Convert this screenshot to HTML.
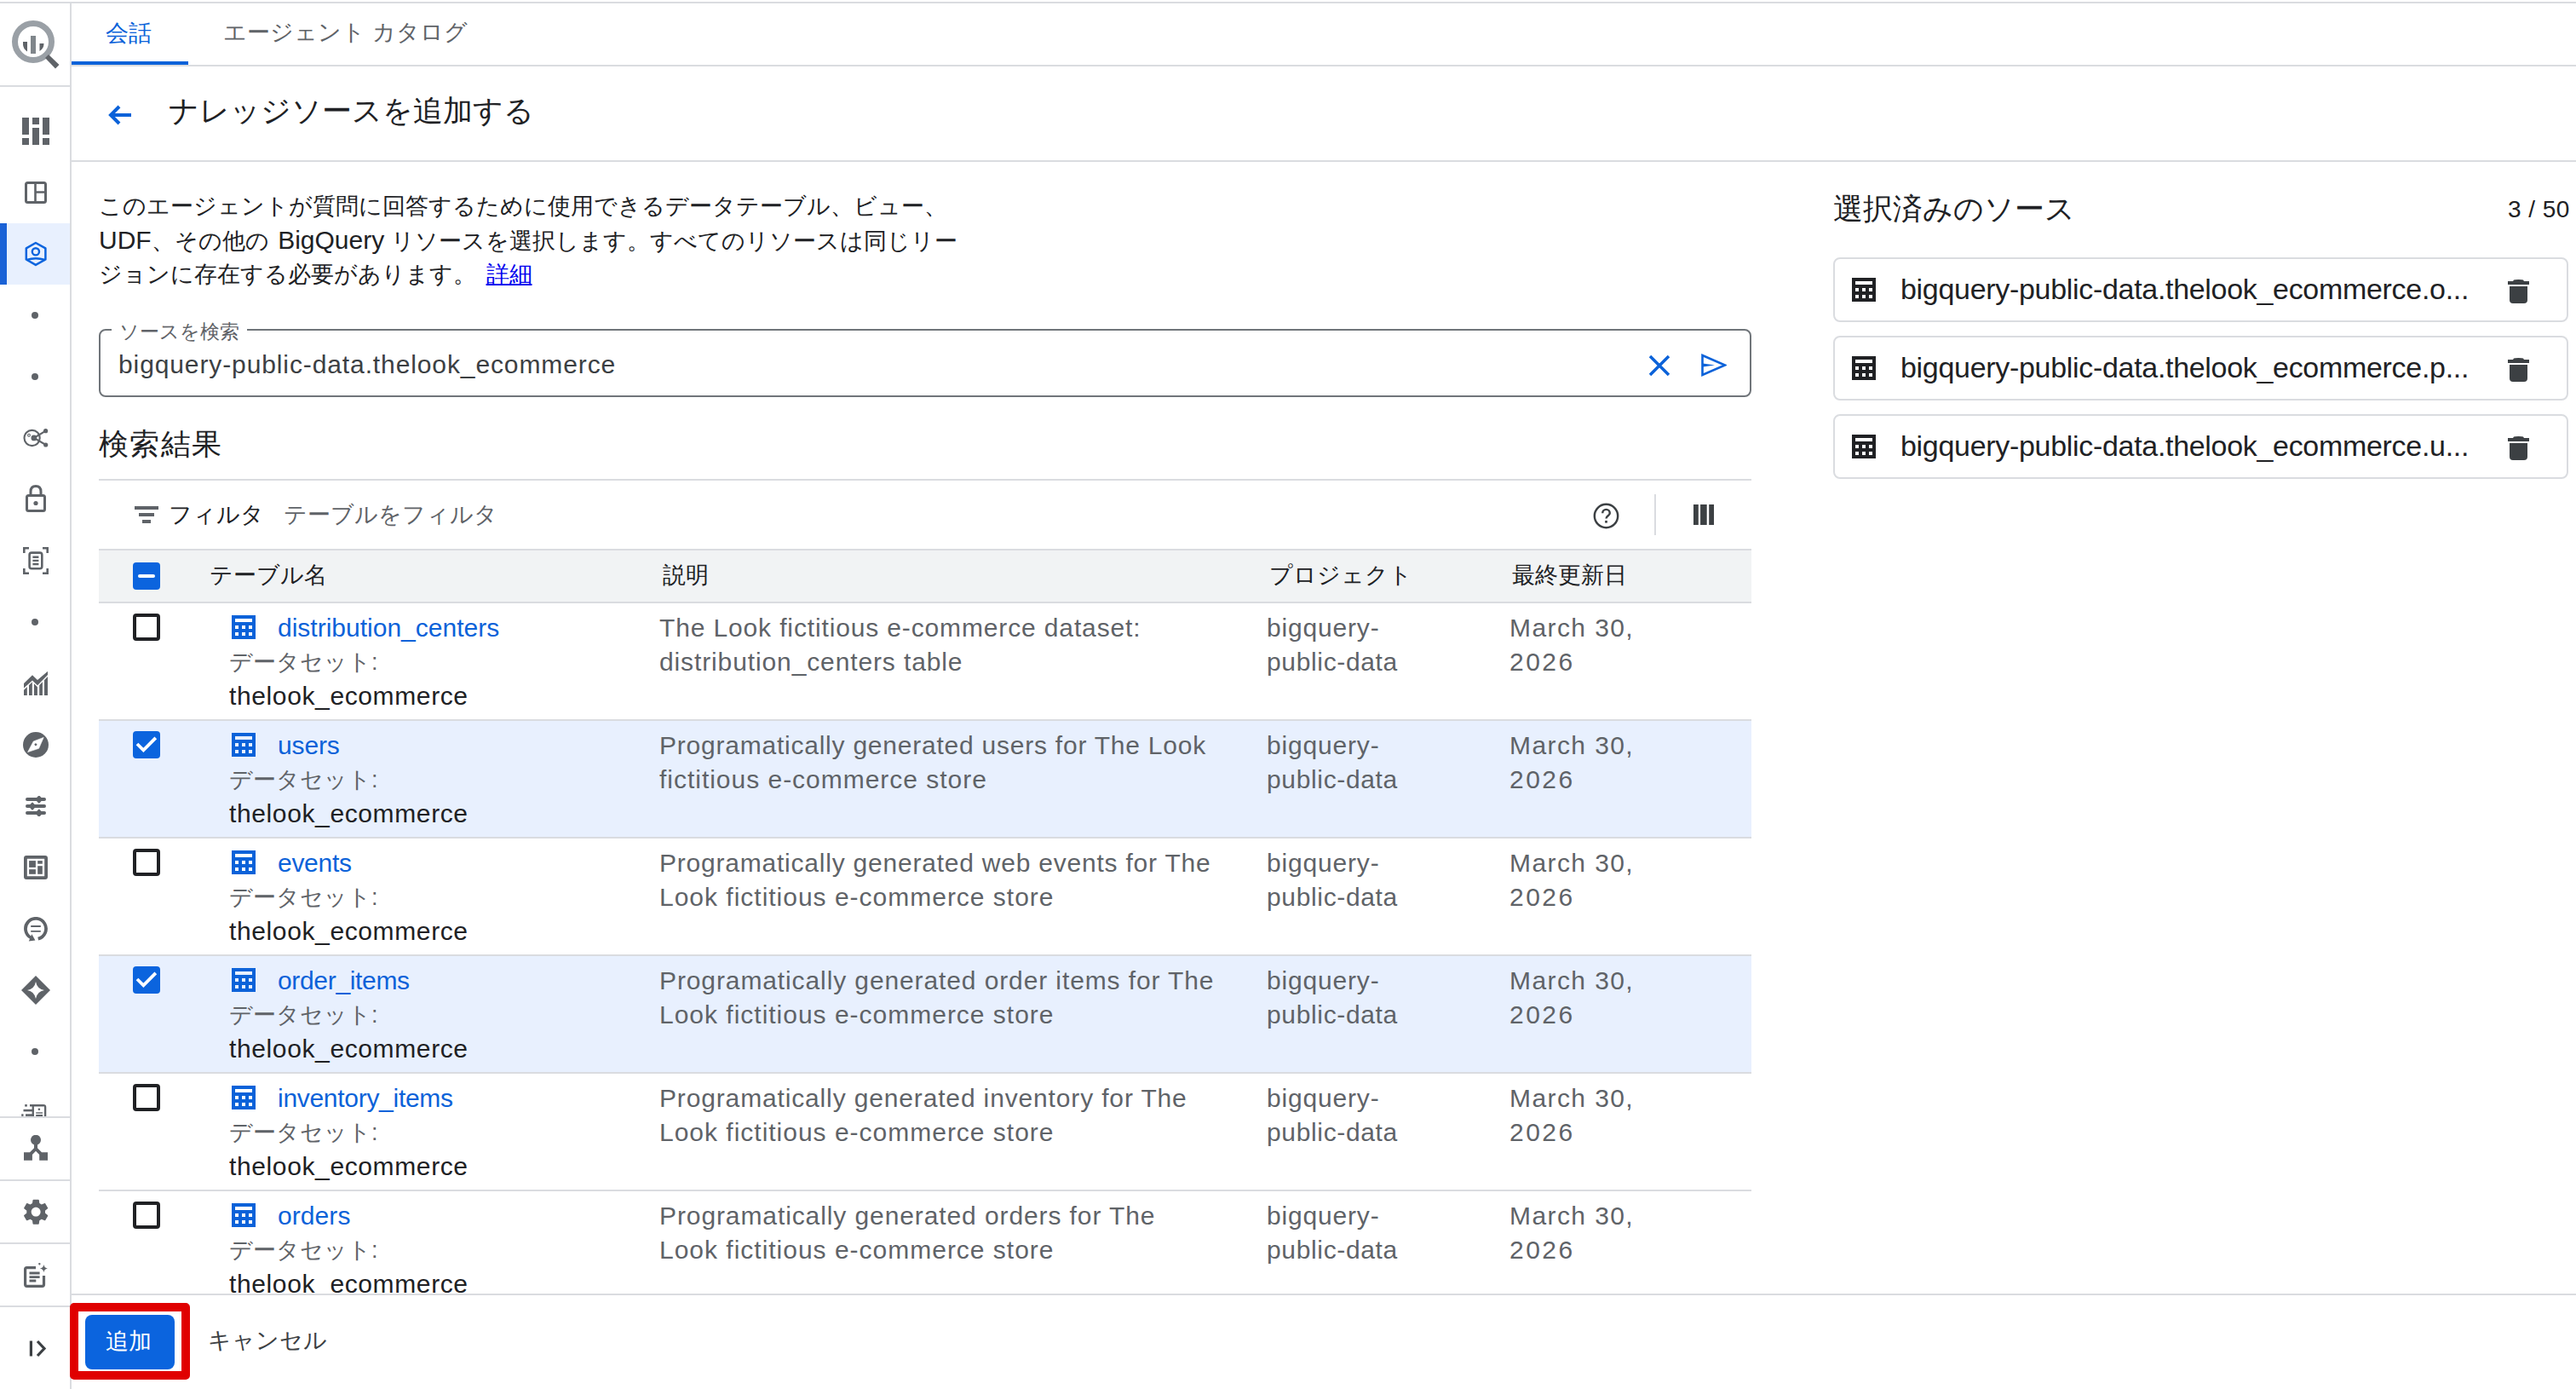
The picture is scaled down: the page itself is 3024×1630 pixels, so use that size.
<!DOCTYPE html>
<html><head><meta charset="utf-8">
<style>
*{box-sizing:border-box;margin:0;padding:0}
html,body{width:3024px;height:1630px;overflow:hidden;background:#fff}
body{position:relative;font-family:"Liberation Sans",sans-serif;color:#202124}
.a{position:absolute}
.line{position:absolute;background:#dadce0}
.ic{position:absolute;display:block}
.t{position:absolute;white-space:nowrap;line-height:40px;font-size:27px}
.lat{font-size:30px}
.t.lat{font-size:30px}
.blue{color:#0b62d9}
.gray{color:#5f6368}
.cb{position:absolute;width:32px;height:32px;border-radius:4px}
.cb.off{border:4px solid #202124}
.cb.on{background:#0b64de}
.row{position:absolute;left:116px;width:1940px;height:138px;border-bottom:2px solid #dadce0}
.row.sel{background:#e8f0fe}
.card{position:absolute;left:2152px;width:863px;height:76px;border:2px solid #dadce0;border-radius:8px}
</style></head><body>
<div class="line" style="left:0;top:2px;width:3024px;height:2px"></div>
<div class="line" style="left:82px;top:4px;width:2px;height:1626px"></div>
<div class="line" style="left:0;top:100px;width:82px;height:2px"></div>
<div class="a" style="left:0;top:262px;width:82px;height:72px;background:#e8f0fe"></div>
<div class="a" style="left:0;top:262px;width:8px;height:72px;background:#1a62d6"></div>
<div class="line" style="left:0;top:1310px;width:82px;height:2px"></div>
<div class="line" style="left:0;top:1384px;width:82px;height:2px"></div>
<div class="line" style="left:0;top:1458px;width:82px;height:2px"></div>
<div class="line" style="left:0;top:1532px;width:82px;height:2px"></div>
<div class="line" style="left:84px;top:76px;width:2940px;height:2px"></div>
<div class="a" style="left:84px;top:72px;width:137px;height:4px;background:#0b62d9"></div>
<div class="t blue" style="left:124px;top:19px;">会話</div>
<div class="t gray" style="left:262px;top:18px;">エージェント カタログ</div>
<div class="line" style="left:84px;top:188px;width:2940px;height:2px"></div>
<svg class="ic" style="left:127px;top:123px" width="28" height="24" viewBox="0 0 28 24"><path d="M13 2 L3 12 L13 22 M3 12 H27" fill="none" stroke="#0b62d9" stroke-width="4"/></svg>
<div class="t " style="left:198px;top:108px;font-size:35px;line-height:44px">ナレッジソースを追加する</div>
<div class="t " style="left:116px;top:222px;">このエージェントが質問に回答するために使用できるデータテーブル、ビュー、</div>
<div class="t " style="left:116px;top:262px;"><span class="lat" style="">UDF</span>、その他の <span class="lat" style="margin-left:3px">BigQuery</span> リソースを選択します。すべてのリソースは同じリー</div>
<div class="t " style="left:116px;top:302px;">ジョンに存在する必要があります。 <span style="color:#0000ee;text-decoration:underline;margin-left:4px">詳細</span></div>
<div class="a" style="left:116px;top:386px;width:1940px;height:80px;border:2px solid #70757a;border-radius:8px"></div>
<div class="a" style="left:131px;top:380px;width:159px;height:10px;background:#fff"></div>
<div class="t gray" style="left:140px;top:374px;font-size:23px;line-height:30px">ソースを検索</div>
<div class="t lat" style="left:139px;top:408px;color:#3c4043;letter-spacing:0.89px">bigquery-public-data.thelook_ecommerce</div>
<svg class="ic" style="left:1935px;top:416px" width="26" height="26" viewBox="0 0 26 26"><path d="M2 2 L24 24 M24 2 L2 24" stroke="#0b62d9" stroke-width="3.5"/></svg>
<svg class="ic" style="left:1997px;top:415px" width="30" height="27" viewBox="0 0 30 27"><path d="M1.5 2 L28 13.5 L1.5 25 Z" fill="none" stroke="#0b62d9" stroke-width="2.6"/><path d="M2 11.6 L16 13.5 L2 15.4 Z" fill="#0b62d9"/></svg>
<div class="t " style="left:116px;top:499px;font-size:35px;line-height:44px;letter-spacing:1.3px">検索結果</div>
<div class="line" style="left:116px;top:562px;width:1940px;height:2px"></div>
<svg class="ic" style="left:158px;top:594px" width="28" height="20" viewBox="0 0 28 20" fill="#5f6368"><rect x="0" y="0" width="28" height="4"/><rect x="5" y="8" width="18" height="4"/><rect x="9" y="16" width="10" height="4"/></svg>
<div class="t " style="left:198px;top:584px;">フィルタ</div>
<div class="t gray" style="left:333px;top:584px;">テーブルをフィルタ</div>
<svg class="ic" style="left:1870px;top:590px" width="31" height="31" viewBox="0 0 24 24"><circle cx="12" cy="12" r="10.6" fill="none" stroke="#3c4043" stroke-width="1.9"/><path d="M8.7 9.4a3.3 3.3 0 0 1 6.6 0c0 2.3-3.3 2.5-3.3 4.9" fill="none" stroke="#3c4043" stroke-width="1.9"/><rect x="10.95" y="16.2" width="2.1" height="2.1" fill="#3c4043"/></svg>
<div class="line" style="left:1942px;top:580px;width:2px;height:48px"></div>
<svg class="ic" style="left:1988px;top:592px" width="24" height="24" viewBox="0 0 24 24" fill="#3c4043"><rect x="0" y="0" width="5.8" height="24"/><rect x="8.1" y="0" width="7.6" height="24"/><rect x="18.2" y="0" width="5.8" height="24"/></svg>
<div class="a" style="left:116px;top:644px;width:1940px;height:64px;background:#f1f3f4;border-top:2px solid #dadce0;border-bottom:2px solid #dadce0"></div>
<div class="cb on" style="left:156px;top:660px"><div class="a" style="left:6px;top:14px;width:20px;height:4px;border-radius:2px;background:#fff"></div></div>
<div class="t " style="left:246px;top:655px;">テーブル名</div>
<div class="t " style="left:778px;top:655px;">説明</div>
<div class="t " style="left:1490px;top:655px;">プロジェクト</div>
<div class="t " style="left:1775px;top:655px;">最終更新日</div>
<div class="row" style="top:708px"></div>
<div class="cb off" style="left:156px;top:720px"></div>
<svg class="ic" style="left:272px;top:722px" width="28" height="28" viewBox="0 0 28 28"><path fill="#0b62d9" fill-rule="evenodd" d="M0 0H28V28H0Z M4 4V8H24V4Z M4 12V16H8V12Z M12 12V16H16V12Z M20 12V16H24V12Z M4 20V24H8V20Z M12 20V24H16V20Z M20 20V24H24V20Z"/></svg>
<div class="t lat blue" style="left:326px;top:717px;letter-spacing:0.0px;">distribution_centers</div>
<div class="t gray" style="left:269px;top:757px;">データセット:</div>
<div class="t lat " style="left:269px;top:797px;letter-spacing:0.62px;">thelook_ecommerce</div>
<div class="t lat gray" style="left:774px;top:717px;letter-spacing:0.86px;">The Look fictitious e-commerce dataset:</div>
<div class="t lat gray" style="left:774px;top:757px;letter-spacing:0.88px;">distribution_centers table</div>
<div class="t lat gray" style="left:1487px;top:717px;letter-spacing:0.82px;">bigquery-</div>
<div class="t lat gray" style="left:1487px;top:757px;letter-spacing:0.65px;">public-data</div>
<div class="t lat gray" style="left:1772px;top:717px;letter-spacing:1.41px;">March 30,</div>
<div class="t lat gray" style="left:1772px;top:757px;letter-spacing:2.47px;">2026</div>
<div class="row sel" style="top:846px"></div>
<div class="cb on" style="left:156px;top:858px"><svg class="ic" style="left:0;top:0" width="32" height="32" viewBox="0 0 32 32"><path d="M5 15 L12.4 22.4 L26.8 7.8" fill="none" stroke="#fff" stroke-width="3.8"/></svg></div>
<svg class="ic" style="left:272px;top:860px" width="28" height="28" viewBox="0 0 28 28"><path fill="#0b62d9" fill-rule="evenodd" d="M0 0H28V28H0Z M4 4V8H24V4Z M4 12V16H8V12Z M12 12V16H16V12Z M20 12V16H24V12Z M4 20V24H8V20Z M12 20V24H16V20Z M20 20V24H24V20Z"/></svg>
<div class="t lat blue" style="left:326px;top:855px;letter-spacing:-0.15px;">users</div>
<div class="t gray" style="left:269px;top:895px;">データセット:</div>
<div class="t lat " style="left:269px;top:935px;letter-spacing:0.62px;">thelook_ecommerce</div>
<div class="t lat gray" style="left:774px;top:855px;letter-spacing:0.77px;">Programatically generated users for The Look</div>
<div class="t lat gray" style="left:774px;top:895px;letter-spacing:0.98px;">fictitious e-commerce store</div>
<div class="t lat gray" style="left:1487px;top:855px;letter-spacing:0.82px;">bigquery-</div>
<div class="t lat gray" style="left:1487px;top:895px;letter-spacing:0.65px;">public-data</div>
<div class="t lat gray" style="left:1772px;top:855px;letter-spacing:1.41px;">March 30,</div>
<div class="t lat gray" style="left:1772px;top:895px;letter-spacing:2.47px;">2026</div>
<div class="row" style="top:984px"></div>
<div class="cb off" style="left:156px;top:996px"></div>
<svg class="ic" style="left:272px;top:998px" width="28" height="28" viewBox="0 0 28 28"><path fill="#0b62d9" fill-rule="evenodd" d="M0 0H28V28H0Z M4 4V8H24V4Z M4 12V16H8V12Z M12 12V16H16V12Z M20 12V16H24V12Z M4 20V24H8V20Z M12 20V24H16V20Z M20 20V24H24V20Z"/></svg>
<div class="t lat blue" style="left:326px;top:993px;letter-spacing:-0.28px;">events</div>
<div class="t gray" style="left:269px;top:1033px;">データセット:</div>
<div class="t lat " style="left:269px;top:1073px;letter-spacing:0.62px;">thelook_ecommerce</div>
<div class="t lat gray" style="left:774px;top:993px;letter-spacing:0.78px;">Programatically generated web events for The</div>
<div class="t lat gray" style="left:774px;top:1033px;letter-spacing:0.99px;">Look fictitious e-commerce store</div>
<div class="t lat gray" style="left:1487px;top:993px;letter-spacing:0.82px;">bigquery-</div>
<div class="t lat gray" style="left:1487px;top:1033px;letter-spacing:0.65px;">public-data</div>
<div class="t lat gray" style="left:1772px;top:993px;letter-spacing:1.41px;">March 30,</div>
<div class="t lat gray" style="left:1772px;top:1033px;letter-spacing:2.47px;">2026</div>
<div class="row sel" style="top:1122px"></div>
<div class="cb on" style="left:156px;top:1134px"><svg class="ic" style="left:0;top:0" width="32" height="32" viewBox="0 0 32 32"><path d="M5 15 L12.4 22.4 L26.8 7.8" fill="none" stroke="#fff" stroke-width="3.8"/></svg></div>
<svg class="ic" style="left:272px;top:1136px" width="28" height="28" viewBox="0 0 28 28"><path fill="#0b62d9" fill-rule="evenodd" d="M0 0H28V28H0Z M4 4V8H24V4Z M4 12V16H8V12Z M12 12V16H16V12Z M20 12V16H24V12Z M4 20V24H8V20Z M12 20V24H16V20Z M20 20V24H24V20Z"/></svg>
<div class="t lat blue" style="left:326px;top:1131px;letter-spacing:-0.33px;">order_items</div>
<div class="t gray" style="left:269px;top:1171px;">データセット:</div>
<div class="t lat " style="left:269px;top:1211px;letter-spacing:0.62px;">thelook_ecommerce</div>
<div class="t lat gray" style="left:774px;top:1131px;letter-spacing:0.89px;">Programatically generated order items for The</div>
<div class="t lat gray" style="left:774px;top:1171px;letter-spacing:0.99px;">Look fictitious e-commerce store</div>
<div class="t lat gray" style="left:1487px;top:1131px;letter-spacing:0.82px;">bigquery-</div>
<div class="t lat gray" style="left:1487px;top:1171px;letter-spacing:0.65px;">public-data</div>
<div class="t lat gray" style="left:1772px;top:1131px;letter-spacing:1.41px;">March 30,</div>
<div class="t lat gray" style="left:1772px;top:1171px;letter-spacing:2.47px;">2026</div>
<div class="row" style="top:1260px"></div>
<div class="cb off" style="left:156px;top:1272px"></div>
<svg class="ic" style="left:272px;top:1274px" width="28" height="28" viewBox="0 0 28 28"><path fill="#0b62d9" fill-rule="evenodd" d="M0 0H28V28H0Z M4 4V8H24V4Z M4 12V16H8V12Z M12 12V16H16V12Z M20 12V16H24V12Z M4 20V24H8V20Z M12 20V24H16V20Z M20 20V24H24V20Z"/></svg>
<div class="t lat blue" style="left:326px;top:1269px;letter-spacing:-0.29px;">inventory_items</div>
<div class="t gray" style="left:269px;top:1309px;">データセット:</div>
<div class="t lat " style="left:269px;top:1349px;letter-spacing:0.62px;">thelook_ecommerce</div>
<div class="t lat gray" style="left:774px;top:1269px;letter-spacing:0.85px;">Programatically generated inventory for The</div>
<div class="t lat gray" style="left:774px;top:1309px;letter-spacing:0.99px;">Look fictitious e-commerce store</div>
<div class="t lat gray" style="left:1487px;top:1269px;letter-spacing:0.82px;">bigquery-</div>
<div class="t lat gray" style="left:1487px;top:1309px;letter-spacing:0.65px;">public-data</div>
<div class="t lat gray" style="left:1772px;top:1269px;letter-spacing:1.41px;">March 30,</div>
<div class="t lat gray" style="left:1772px;top:1309px;letter-spacing:2.47px;">2026</div>
<div class="row" style="top:1398px"></div>
<div class="cb off" style="left:156px;top:1410px"></div>
<svg class="ic" style="left:272px;top:1412px" width="28" height="28" viewBox="0 0 28 28"><path fill="#0b62d9" fill-rule="evenodd" d="M0 0H28V28H0Z M4 4V8H24V4Z M4 12V16H8V12Z M12 12V16H16V12Z M20 12V16H24V12Z M4 20V24H8V20Z M12 20V24H16V20Z M20 20V24H24V20Z"/></svg>
<div class="t lat blue" style="left:326px;top:1407px;letter-spacing:0.08px;">orders</div>
<div class="t gray" style="left:269px;top:1447px;">データセット:</div>
<div class="t lat " style="left:269px;top:1487px;letter-spacing:0.62px;">thelook_ecommerce</div>
<div class="t lat gray" style="left:774px;top:1407px;letter-spacing:0.9px;">Programatically generated orders for The</div>
<div class="t lat gray" style="left:774px;top:1447px;letter-spacing:0.99px;">Look fictitious e-commerce store</div>
<div class="t lat gray" style="left:1487px;top:1407px;letter-spacing:0.82px;">bigquery-</div>
<div class="t lat gray" style="left:1487px;top:1447px;letter-spacing:0.65px;">public-data</div>
<div class="t lat gray" style="left:1772px;top:1407px;letter-spacing:1.41px;">March 30,</div>
<div class="t lat gray" style="left:1772px;top:1447px;letter-spacing:2.47px;">2026</div>
<div class="a" style="left:84px;top:1518px;width:2940px;height:112px;background:#fff;border-top:2px solid #dadce0"></div>
<div class="a" style="left:82px;top:1529px;width:141px;height:90px;border:10px solid #e00000;border-radius:5px"></div>
<div class="a" style="left:100px;top:1543px;width:105px;height:64px;border-radius:8px;background:#0b64de"></div>
<div class="t " style="left:124px;top:1554px;color:#fff">追加</div>
<div class="t " style="left:244px;top:1553px;color:#3c4043">キャンセル</div>
<div class="t " style="left:2152px;top:223px;font-size:35px;line-height:44px">選択済みのソース</div>
<div class="t lat" style="left:2944px;top:226px;font-size:28px;letter-spacing:0.44px">3 / 50</div>
<div class="card" style="top:302px"></div>
<svg class="ic" style="left:2174px;top:326px" width="28" height="28" viewBox="0 0 28 28"><path fill="#202124" fill-rule="evenodd" d="M0 0H28V28H0Z M4 4V8H24V4Z M4 12V16H8V12Z M12 12V16H16V12Z M20 12V16H24V12Z M4 20V24H8V20Z M12 20V24H16V20Z M20 20V24H24V20Z"/></svg>
<div class="t lat" style="left:2231px;top:317px;font-size:34px;line-height:44px;letter-spacing:-0.31px">bigquery-public-data.thelook_ecommerce.o...</div>
<svg class="ic" style="left:2944px;top:328px" width="25" height="28" viewBox="0 0 25 28"><path fill="#3c4043" d="M7 0.5 Q8 0 12.5 0 Q17 0 18 0.5 L19 2 H25 V6 H0 V2 H6 Z M2 8 H23 V24 Q23 28 19 28 H6 Q2 28 2 24 Z"/></svg>
<div class="card" style="top:394px"></div>
<svg class="ic" style="left:2174px;top:418px" width="28" height="28" viewBox="0 0 28 28"><path fill="#202124" fill-rule="evenodd" d="M0 0H28V28H0Z M4 4V8H24V4Z M4 12V16H8V12Z M12 12V16H16V12Z M20 12V16H24V12Z M4 20V24H8V20Z M12 20V24H16V20Z M20 20V24H24V20Z"/></svg>
<div class="t lat" style="left:2231px;top:409px;font-size:34px;line-height:44px;letter-spacing:-0.31px">bigquery-public-data.thelook_ecommerce.p...</div>
<svg class="ic" style="left:2944px;top:420px" width="25" height="28" viewBox="0 0 25 28"><path fill="#3c4043" d="M7 0.5 Q8 0 12.5 0 Q17 0 18 0.5 L19 2 H25 V6 H0 V2 H6 Z M2 8 H23 V24 Q23 28 19 28 H6 Q2 28 2 24 Z"/></svg>
<div class="card" style="top:486px"></div>
<svg class="ic" style="left:2174px;top:510px" width="28" height="28" viewBox="0 0 28 28"><path fill="#202124" fill-rule="evenodd" d="M0 0H28V28H0Z M4 4V8H24V4Z M4 12V16H8V12Z M12 12V16H16V12Z M20 12V16H24V12Z M4 20V24H8V20Z M12 20V24H16V20Z M20 20V24H24V20Z"/></svg>
<div class="t lat" style="left:2231px;top:501px;font-size:34px;line-height:44px;letter-spacing:-0.31px">bigquery-public-data.thelook_ecommerce.u...</div>
<svg class="ic" style="left:2944px;top:512px" width="25" height="28" viewBox="0 0 25 28"><path fill="#3c4043" d="M7 0.5 Q8 0 12.5 0 Q17 0 18 0.5 L19 2 H25 V6 H0 V2 H6 Z M2 8 H23 V24 Q23 28 19 28 H6 Q2 28 2 24 Z"/></svg>
<svg class="ic" style="left:12px;top:22px" width="60" height="60" viewBox="0 0 60 60"><circle cx="27" cy="27" r="21.5" fill="none" stroke="#9aa0a6" stroke-width="7"/><path d="M45 42 L57.5 54 L53 58.5 L41 46 Z" fill="#5f6368"/><rect x="24" y="20" width="6" height="21" fill="#80868b"/><path d="M15 27 H20 V38.5 Q15 35 15 30 Z" fill="#5f6368"/><path d="M34.5 29 H39.5 Q39.5 35 34.5 38 Z" fill="#5f6368"/></svg>
<svg class="ic" style="left:26px;top:138px" width="32" height="32" viewBox="0 0 32 32" fill="#5f6368"><rect x="0" y="0" width="8" height="20"/><rect x="0" y="24" width="8" height="8"/><rect x="12" y="0" width="8" height="8"/><rect x="12" y="12" width="8" height="20"/><rect x="24" y="0" width="8" height="20"/><rect x="24" y="24" width="8" height="8"/></svg>
<svg class="ic" style="left:29px;top:213px" width="26" height="26" viewBox="0 0 26 26"><rect x="1.5" y="1.5" width="23" height="23" rx="2" fill="none" stroke="#5f6368" stroke-width="3"/><path d="M12.5 2 V24 M12.5 12.5 H24" stroke="#5f6368" stroke-width="2.6"/></svg>
<svg class="ic" style="left:28px;top:282px" width="28" height="32" viewBox="0 0 28 32"><path d="M13.9 3 L25.4 9.4 V22.5 L13.9 28.9 L2.8 22.5 V9.4 Z" fill="none" stroke="#0b64de" stroke-width="2.5" stroke-linejoin="round"/><circle cx="13.9" cy="13.3" r="4.1" fill="none" stroke="#0b64de" stroke-width="2.4"/><path d="M3.4 23 Q13.9 19.6 24.8 23" fill="none" stroke="#0b64de" stroke-width="2.5"/></svg>
<div class="a" style="left:37px;top:366px;width:8px;height:8px;border-radius:4px;background:#5f6368"></div>
<div class="a" style="left:37px;top:438px;width:8px;height:8px;border-radius:4px;background:#5f6368"></div>
<div class="a" style="left:37px;top:726px;width:8px;height:8px;border-radius:4px;background:#5f6368"></div>
<div class="a" style="left:37px;top:1230px;width:8px;height:8px;border-radius:4px;background:#5f6368"></div>
<svg class="ic" style="left:27px;top:501px" width="30" height="26" viewBox="0 0 30 26"><circle cx="10.6" cy="13" r="9.1" fill="none" stroke="#5f6368" stroke-width="2.1"/><circle cx="12.9" cy="12.9" r="3.4" fill="#5f6368"/><circle cx="7" cy="9.7" r="1.4" fill="none" stroke="#5f6368" stroke-width="1.1"/><path d="M12.9 12.9 L26.6 4.7 M12.9 12.9 L26.7 21" stroke="#5f6368" stroke-width="2.1"/><circle cx="26.6" cy="4.7" r="2.6" fill="#5f6368"/><circle cx="26.7" cy="21" r="2.6" fill="#5f6368"/></svg>
<svg class="ic" style="left:30px;top:569px" width="24" height="32" viewBox="0 0 24 32"><path d="M6 12 V8 Q6 1.5 12 1.5 Q18 1.5 18 8 V12" fill="none" stroke="#5f6368" stroke-width="3"/><rect x="1.5" y="12.5" width="21" height="18" rx="2" fill="none" stroke="#5f6368" stroke-width="3"/><circle cx="12" cy="21.5" r="2.6" fill="#5f6368"/></svg>
<svg class="ic" style="left:27px;top:642px" width="30" height="32" viewBox="0 0 30 32" fill="none" stroke="#5f6368" stroke-width="2.6"><path d="M1.3 7 V1.3 H7 M23 1.3 H28.7 V7 M1.3 25 V30.7 H7 M23 30.7 H28.7 V25"/><rect x="7.6" y="6.6" width="14.7" height="18.6" rx="2.5"/><path d="M11.4 11.7 H18.4 M11.4 15.9 H18.4 M11.4 20 H18.4" stroke-width="2.4"/></svg>
<svg class="ic" style="left:28px;top:788px" width="28" height="28" viewBox="0 0 28 28" fill="#5f6368"><defs><clipPath id="chc"><path d="M0 21.8 L10 12.3 L16 18.2 L28 6 V28 H0 Z"/></clipPath></defs><path d="M0 13.9 L10 4.2 L16 10 L28 -0.2 V4 L16 16.2 L10 10.4 L0 19.6 Z"/><g clip-path="url(#chc)"><rect x="0" y="0" width="3.8" height="28"/><rect x="6" y="0" width="3.8" height="28"/><rect x="12" y="0" width="3.9" height="28"/><rect x="18.2" y="0" width="3.7" height="28"/><rect x="24" y="0" width="4" height="28"/></g></svg>
<svg class="ic" style="left:27px;top:859px" width="30" height="30" viewBox="0 0 30 30"><circle cx="15" cy="15" r="15" fill="#5f6368"/><path d="M24.2 6.4 L18.6 19.3 L5.6 23.6 L12.2 11 Z" fill="#fff" stroke="#fff" stroke-width="0.6" stroke-linejoin="round"/><rect x="13.7" y="13.6" width="2.5" height="2.5" transform="rotate(45 14.95 14.85)" fill="#5f6368"/></svg>
<svg class="ic" style="left:30px;top:934px" width="24" height="24" viewBox="0 0 24 24" fill="#5f6368" stroke="#5f6368" stroke-linejoin="round"><rect x="0" y="2.1" width="24" height="3.8" rx="1.9" stroke="none"/><rect x="0" y="10.1" width="24" height="3.8" rx="1.9" stroke="none"/><rect x="0" y="18.1" width="24" height="3.8" rx="1.9" stroke="none"/><path d="M15.8 0.6 L19 4 L15.8 7.6 L12.6 4 Z" stroke-width="2"/><path d="M8 8.6 L11.2 12 L8 15.6 L4.8 12 Z" stroke-width="2"/><path d="M15.8 16.6 L19 20 L15.8 23.6 L12.6 20 Z" stroke-width="2"/></svg>
<svg class="ic" style="left:28px;top:1004px" width="28" height="28" viewBox="0 0 28 28" fill="#5f6368"><path fill-rule="evenodd" d="M3 0 H25 Q28 0 28 3 V25 Q28 28 25 28 H3 Q0 28 0 25 V3 Q0 0 3 0 Z M3.8 3.8 V24.2 H24.2 V3.8 Z"/><rect x="6.1" y="6.1" width="7.8" height="7.8"/><rect x="6.1" y="16.2" width="7.8" height="5.6"/><rect x="16.2" y="6.1" width="5.6" height="3.6"/><rect x="16.2" y="12.2" width="5.6" height="9.6"/></svg>
<svg class="ic" style="left:28px;top:1076px" width="28" height="30" viewBox="0 0 28 30" fill="none" stroke="#5f6368" stroke-width="3.8"><path d="M16.72 25.56 A12 12 0 1 0 8.6 24.6"/><path d="M9.3 20.2 L13.4 27.4 L5.8 28.6 Z" fill="#5f6368" stroke="none"/><path d="M8.2 11 H19.8 M8.2 16.9 H19.8" stroke-width="1.9"/></svg>
<svg class="ic" style="left:25px;top:1145px" width="34" height="34" viewBox="0 0 34 34"><path d="M17 0 L34 17 L17 34 L0 17 Z" fill="#5f6368"/><path d="M17 7 Q18.5 15.5 27 17 Q18.5 18.5 17 27 Q15.5 18.5 7 17 Q15.5 15.5 17 7 Z" fill="#fff"/></svg>
<div class="a" style="left:0;top:1290px;width:82px;height:20px;overflow:hidden"><svg class="ic" style="left:25px;top:6px" width="30" height="20" viewBox="0 0 30 20" fill="#5f6368"><rect x="4.2" y="0" width="2.6" height="2.6"/><path d="M10 0 H26 Q29.3 0 29.3 3.3 V20 H27 V2.6 H14.9 V20 H12.6 V2.6 H10 Z"/><rect x="2.5" y="5.8" width="12.1" height="2.6"/><rect x="0.2" y="11.3" width="2.3" height="2.6"/><rect x="5" y="11.3" width="9.9" height="2.6"/><circle cx="20.9" cy="5.8" r="1.3"/><rect x="17.2" y="9.3" width="7.8" height="1.4"/><rect x="17.2" y="12" width="7.8" height="2"/></svg></div>
<svg class="ic" style="left:28px;top:1332px" width="28" height="30" viewBox="0 0 28 30" fill="#5f6368"><circle cx="14" cy="5.8" r="6"/><path d="M12 10 H16 V15.2 L21 20.2 H28 V29.7 H18.2 V23 L14 18.7 L9.9 23 V29.7 H0 V20.2 H7 L12 15.2 Z"/></svg>
<svg class="ic" style="left:23.85px;top:1403.85px" width="36.3" height="36.3" viewBox="0 0 24 24" fill="#5f6368"><path d="M19.14 12.94c.04-.3.06-.61.06-.94 0-.32-.02-.64-.07-.94l2.03-1.58c.18-.14.23-.41.12-.61l-1.92-3.32c-.12-.22-.37-.29-.59-.22l-2.39.96c-.5-.38-1.03-.7-1.62-.94l-.36-2.54c-.04-.24-.24-.41-.48-.41h-3.84c-.24 0-.43.17-.47.41l-.36 2.54c-.59.24-1.13.57-1.62.94l-2.39-.96c-.22-.08-.47 0-.59.22L2.74 8.87c-.12.21-.08.47.12.61l2.03 1.58c-.05.3-.09.63-.09.94s.02.64.07.94l-2.03 1.58c-.18.14-.23.41-.12.61l1.92 3.32c.12.22.37.29.59.22l2.39-.96c.5.38 1.03.7 1.62.94l.36 2.54c.05.24.24.41.48.41h3.84c.24 0 .44-.17.47-.41l.36-2.54c.59-.24 1.13-.56 1.62-.94l2.39.96c.22.08.47 0 .59-.22l1.92-3.32c.12-.22.07-.47-.12-.61l-2.01-1.58zM12 15.6c-1.98 0-3.6-1.62-3.6-3.6s1.62-3.6 3.6-3.6 3.6 1.62 3.6 3.6-1.62 3.6-3.6 3.6z"/></svg>
<svg class="ic" style="left:28px;top:1482px" width="29" height="30" viewBox="0 0 29 30"><path d="M14 5.6 H3.5 Q1.6 5.6 1.6 7.5 V25.3 Q1.6 27.3 3.5 27.3 H21.6 Q23.5 27.3 23.5 25.3 V15" fill="none" stroke="#5f6368" stroke-width="3.2"/><path d="M6.5 12 H18.6 M6.5 16.6 H18.6 M6.5 21 H14.3" stroke="#5f6368" stroke-width="2.8"/><path d="M23.4 2 Q24 6 28 6.6 Q24 7.2 23.4 11.2 Q22.8 7.2 18.8 6.6 Q22.8 6 23.4 2Z" fill="#5f6368"/><path d="M18.3 -1 Q18.6 0.7 20.3 1 Q18.6 1.3 18.3 3 Q18 1.3 16.3 1 Q18 0.7 18.3 -1Z" fill="#5f6368"/></svg>
<svg class="ic" style="left:34px;top:1572px" width="22" height="21" viewBox="0 0 22 21" fill="none" stroke="#3c4043" stroke-width="3.2"><path d="M2.4 1.5 V19.5"/><path d="M10 2 L18 10.5 L10 19"/></svg>
</body></html>
